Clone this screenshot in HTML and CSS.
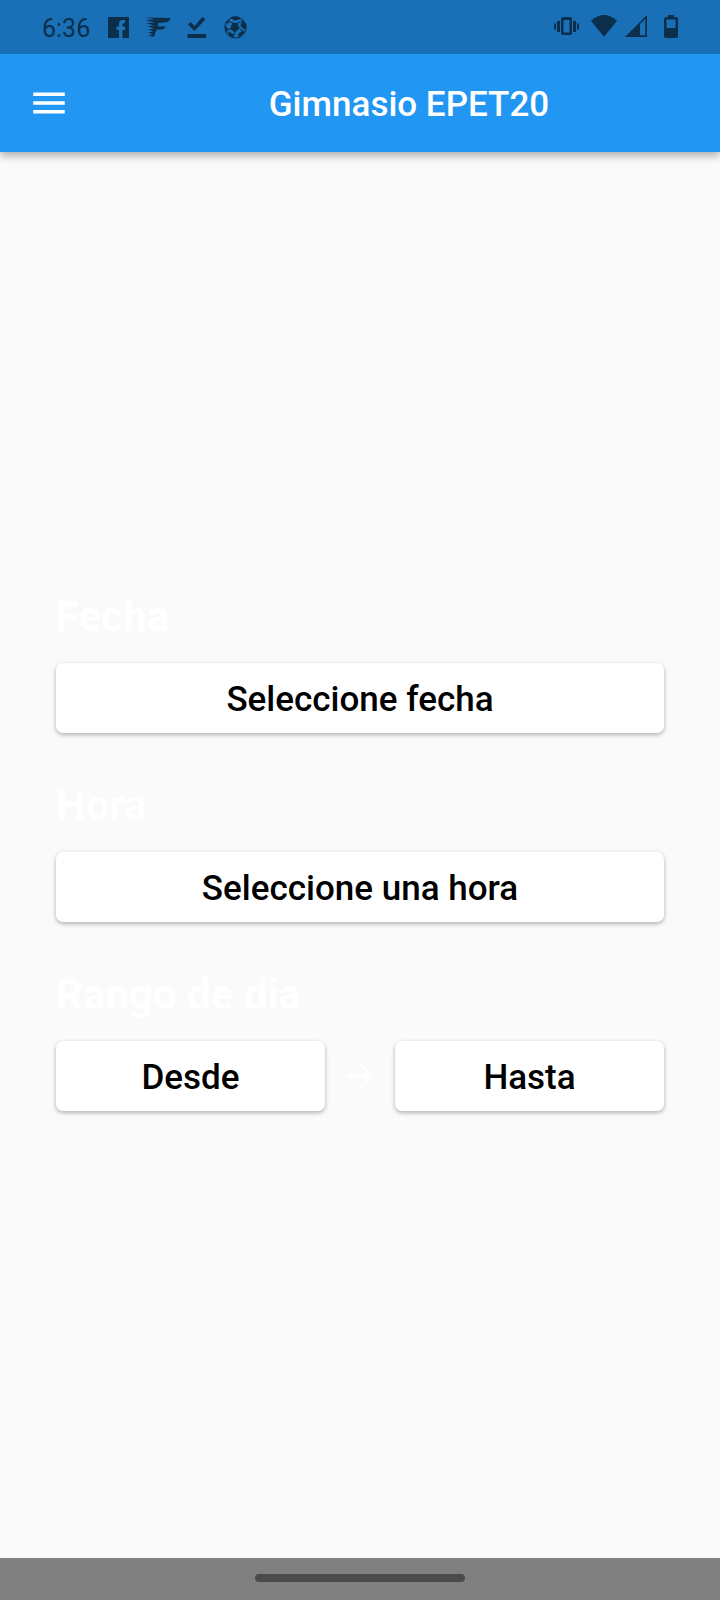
FILE: index.html
```
<!DOCTYPE html>
<html lang="es">
<head>
<meta charset="utf-8">
<meta name="viewport" content="width=device-width, initial-scale=1">
<title>Gimnasio EPET20</title>
<link rel="stylesheet" href="styles.css">
</head>
<body>
<div class="status">
  <div class="status-left">
    <span class="clock">6:36</span>
    <svg width="24" height="24" viewBox="0 0 24 24" aria-hidden="true"><path fill-rule="evenodd" d="M1 2H22V23H15.500V15H18V11.500H15.500V9.500Q15.500 8.300 16.800 8.300H18V5H15.500Q12 5 12 9V11.500H9.500V15H12V23H1Z"/></svg>
    <svg width="27" height="24" viewBox="0 0 27 24" aria-hidden="true"><path d="M0 2.500L25.500 3Q24.500 7 20.500 7.500L13.500 8L12.500 11.500L20.500 11.200Q19.500 14.500 16.500 14.500L11.500 14.800L9 22L3.500 20.500L8 19.500L3 17.500L8.500 16.500L3 14.500L9 13.500L2 11L9.500 10.500L1 8L10 7.500L0 5L10 4.500Z"/></svg>
    <svg width="22" height="24" viewBox="0 0 22 24" aria-hidden="true"><path d="M2 9.500L4.500 7L8.500 11L16.500 2L19.300 4.500L8.500 16Z"/><rect x="1.500" y="19" width="18.500" height="4"/></svg>
    <svg width="26" height="24" viewBox="0 0 26 24" aria-hidden="true"><circle cx="13.500" cy="12.500" r="10.600" class="line"/><path d="M10.500 7.500L15.500 8L17.500 13.500L13 17.500L8 14ZM8 3L13 5.500L19 4L16 1.500H11ZM20 5L18.500 11L22 14.500L24.300 13V9ZM16 19L20.500 15.500L23 17L17 22.800ZM6 16.500L11.500 19L12.500 23L7 21ZM3 9L6.500 8L8 4L4 7ZM2.500 10.500L6 13.500L4.500 18.500Z"/><path class="seam" d="M10.500 8L7 6.500M15.500 8L19 6.500M17.500 13.500L20.500 16M13 17.500L12 20M8 14L5 14.500"/></svg>
  </div>
  <div class="status-right">
    <svg width="28" height="24" viewBox="0 0 28 24" aria-hidden="true"><path fill-rule="evenodd" d="M10 2H17Q19 2 19 4V18Q19 20 17 20H10Q8 20 8 18V4Q8 2 10 2ZM10.500 5V17.500H16.500V5ZM4 6H7V17H4ZM20 6H23V17H20ZM1 8.500H3V14.500H1ZM24 8.500H26V14.500H24Z"/></svg>
    <svg width="28" height="24" viewBox="0 0 28 24" aria-hidden="true"><path d="M2 5.800Q15 -5.600 28 5.800L15 21.800Z"/></svg>
    <svg width="24" height="24" viewBox="0 0 24 24" aria-hidden="true"><path fill-rule="evenodd" d="M0 22L22 0V22ZM15 9V20.300H20.300V4Z"/></svg>
    <svg width="28" height="24" viewBox="0 0 28 24" aria-hidden="true"><path fill-rule="evenodd" d="M11 0H17V2H19Q21 2 21 4V21Q21 23 19 23H9Q7 23 7 21V4Q7 2 9 2H11ZM9.500 4.500V13H18.500V4.500Z"/></svg>
  </div>
</div>
<header class="appbar">
  <button class="menu" type="button" aria-label="Menú">
    <svg width="42" height="42" viewBox="0 0 24 24" aria-hidden="true"><path d="M3 18h18v-2H3v2zm0-5h18v-2H3v2zm0-7v2h18V6H3z"/></svg>
  </button>
  <h1 class="title">Gimnasio EPET20</h1>
</header>
<main class="content">
  <section class="group">
    <h2 class="label" id="fecha">Fecha</h2>
    <button class="pick" type="button" aria-describedby="fecha">Seleccione fecha</button>
  </section>
  <section class="group">
    <h2 class="label" id="hora">Hora</h2>
    <button class="pick" type="button" aria-describedby="hora">Seleccione una hora</button>
  </section>
  <section class="group">
    <h2 class="label" id="rango">Rango de dia</h2>
    <div class="range">
      <button class="pick" type="button" aria-describedby="rango">Desde</button>
      <svg class="arrow" width="42" height="42" viewBox="0 0 24 24" aria-hidden="true"><path d="M12 4l-1.410 1.410L16.170 11H4v2h12.170l-5.580 5.590L12 20l8-8z"/></svg>
      <button class="pick" type="button" aria-describedby="rango">Hasta</button>
    </div>
  </section>
</main>
<footer class="navbar"><div class="handle"></div></footer>
</body>
</html>
```
FILE: styles.css
```
* { box-sizing: border-box; }
body {
  margin: 0;
  min-height: 100vh;
  display: flex;
  flex-direction: column;
  background: #fafafa;
  font-family: Roboto, "Liberation Sans", sans-serif;
}
svg { display: block; flex: none; }
.status {
  position: relative;
  z-index: 1;
  height: 54px;
  padding: 0 35px 0 42px;
  display: flex;
  align-items: center;
  justify-content: space-between;
  background: #1a70b7;
  color: #0b2e4a;
  fill: #0b2e4a;
}
.status-left, .status-right { display: flex; align-items: center; }
.status-left { gap: 14px; }
.status-right { gap: 8px; }
.clock { min-width: 51px; padding-top: 4px; font-size: 25px; line-height: 30px; }
.line { fill: none; stroke: #0b2e4a; stroke-width: 1; }
.seam { fill: none; stroke: #0b2e4a; stroke-width: 1; }
.appbar {
  height: 98px;
  display: flex;
  align-items: center;
  background: #2196f3;
  color: #fff;
  box-shadow: 0 4px 8px rgba(0, 0, 0, 0.3);
}
.menu {
  width: 98px;
  height: 98px;
  padding: 0;
  border: 0;
  display: flex;
  align-items: center;
  justify-content: center;
  background: none;
  fill: #fff;
}
.title {
  flex: 1;
  margin: 0;
  padding-top: 2px;
  text-align: center;
  font-size: 35px;
  font-weight: 500;
  line-height: 41px;
}
.content {
  flex: 1;
  padding: 0 56px 7px;
  display: flex;
  flex-direction: column;
  justify-content: center;
  gap: 48px;
}
.group { display: flex; flex-direction: column; gap: 22px; }
.label {
  margin: 0;
  color: #fff;
  font-size: 42px;
  font-weight: 700;
  line-height: 49px;
}
.pick {
  flex: 1 1 0;
  min-height: 70px;
  padding: 2px 28px 0;
  border: 0;
  border-radius: 7px;
  background: #fff;
  color: #000;
  font-family: inherit;
  font-size: 35px;
  font-weight: 500;
  line-height: 41px;
  box-shadow: 0 2px 4px rgba(0, 0, 0, 0.24), 0 1px 5px rgba(0, 0, 0, 0.08);
}
.range { display: flex; align-items: center; gap: 14px; }
.arrow { fill: #fff; }
.navbar {
  height: 42px;
  padding-bottom: 2px;
  display: flex;
  align-items: center;
  justify-content: center;
  background: #808080;
}
.handle { width: 210px; height: 8px; border-radius: 4px; background: #4b4b4b; }
```
